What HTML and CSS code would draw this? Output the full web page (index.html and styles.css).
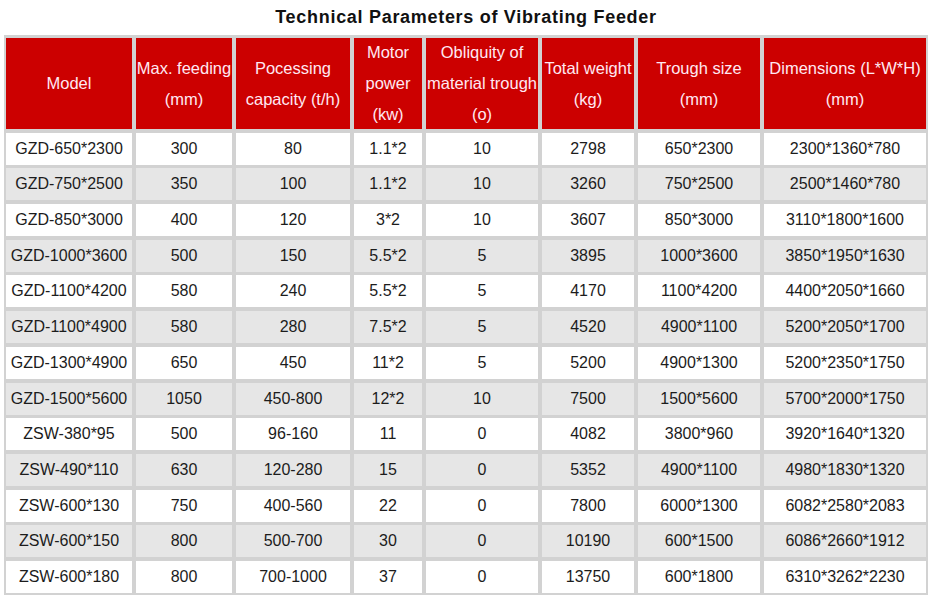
FILE: index.html
```html
<!DOCTYPE html>
<html>
<head>
<meta charset="utf-8">
<link rel="stylesheet" href="styles.css">
</head>
<body>
<h1 class="title">Technical Parameters of Vibrating Feeder</h1>
<div class="grid">
  <div class="th">Model</div>
  <div class="th">Max. feeding<br>(mm)</div>
  <div class="th">Pocessing<br>capacity (t/h)</div>
  <div class="th">Motor<br>power<br>(kw)</div>
  <div class="th">Obliquity of<br>material trough<br>(o)</div>
  <div class="th">Total weight<br>(kg)</div>
  <div class="th">Trough size<br>(mm)</div>
  <div class="th">Dimensions (L*W*H)<br>(mm)</div>

  <div class="td">GZD-650*2300</div><div class="td">300</div><div class="td">80</div><div class="td">1.1*2</div><div class="td">10</div><div class="td">2798</div><div class="td">650*2300</div><div class="td">2300*1360*780</div>
  <div class="td alt">GZD-750*2500</div><div class="td alt">350</div><div class="td alt">100</div><div class="td alt">1.1*2</div><div class="td alt">10</div><div class="td alt">3260</div><div class="td alt">750*2500</div><div class="td alt">2500*1460*780</div>
  <div class="td">GZD-850*3000</div><div class="td">400</div><div class="td">120</div><div class="td">3*2</div><div class="td">10</div><div class="td">3607</div><div class="td">850*3000</div><div class="td">3110*1800*1600</div>
  <div class="td alt">GZD-1000*3600</div><div class="td alt">500</div><div class="td alt">150</div><div class="td alt">5.5*2</div><div class="td alt">5</div><div class="td alt">3895</div><div class="td alt">1000*3600</div><div class="td alt">3850*1950*1630</div>
  <div class="td">GZD-1100*4200</div><div class="td">580</div><div class="td">240</div><div class="td">5.5*2</div><div class="td">5</div><div class="td">4170</div><div class="td">1100*4200</div><div class="td">4400*2050*1660</div>
  <div class="td alt">GZD-1100*4900</div><div class="td alt">580</div><div class="td alt">280</div><div class="td alt">7.5*2</div><div class="td alt">5</div><div class="td alt">4520</div><div class="td alt">4900*1100</div><div class="td alt">5200*2050*1700</div>
  <div class="td">GZD-1300*4900</div><div class="td">650</div><div class="td">450</div><div class="td">11*2</div><div class="td">5</div><div class="td">5200</div><div class="td">4900*1300</div><div class="td">5200*2350*1750</div>
  <div class="td alt">GZD-1500*5600</div><div class="td alt">1050</div><div class="td alt">450-800</div><div class="td alt">12*2</div><div class="td alt">10</div><div class="td alt">7500</div><div class="td alt">1500*5600</div><div class="td alt">5700*2000*1750</div>
  <div class="td">ZSW-380*95</div><div class="td">500</div><div class="td">96-160</div><div class="td">11</div><div class="td">0</div><div class="td">4082</div><div class="td">3800*960</div><div class="td">3920*1640*1320</div>
  <div class="td alt">ZSW-490*110</div><div class="td alt">630</div><div class="td alt">120-280</div><div class="td alt">15</div><div class="td alt">0</div><div class="td alt">5352</div><div class="td alt">4900*1100</div><div class="td alt">4980*1830*1320</div>
  <div class="td">ZSW-600*130</div><div class="td">750</div><div class="td">400-560</div><div class="td">22</div><div class="td">0</div><div class="td">7800</div><div class="td">6000*1300</div><div class="td">6082*2580*2083</div>
  <div class="td alt">ZSW-600*150</div><div class="td alt">800</div><div class="td alt">500-700</div><div class="td alt">30</div><div class="td alt">0</div><div class="td alt">10190</div><div class="td alt">600*1500</div><div class="td alt">6086*2660*1912</div>
  <div class="td">ZSW-600*180</div><div class="td">800</div><div class="td">700-1000</div><div class="td">37</div><div class="td">0</div><div class="td">13750</div><div class="td">600*1800</div><div class="td">6310*3262*2230</div>
</div>
</body>
</html>
```
FILE: styles.css
```css
html, body {
  margin: 0;
  padding: 0;
  background: #ffffff;
  font-family: "Liberation Sans", Arial, sans-serif;
}
body {
  padding: 0 6px 0 4px;
}
.title {
  margin: 0;
  height: 35px;
  line-height: 35px;
  font-size: 18px;
  font-weight: bold;
  letter-spacing: 0.7px;
  text-align: center;
  color: #111111;
}
.grid {
  display: grid;
  grid-template-columns: 126px 96px 114px 68px 112px 92px 122px 162px;
  grid-template-rows: 91px;
  grid-auto-rows: 32px;
  column-gap: 4px;
  row-gap: 3.7px;
  padding: 3px 2px 2px 2px;
  background: #d2d2d2;
  width: 920px;
}
.th {
  background: #cc0000;
  color: #ffe8f2;
  font-size: 16.5px;
  line-height: 31px;
  text-align: center;
  display: flex;
  align-items: center;
  justify-content: center;
  white-space: nowrap;
}
.td {
  background: #ffffff;
  color: #1c1c1c;
  font-size: 16px;
  display: flex;
  align-items: center;
  justify-content: center;
  white-space: nowrap;
}
.td.alt {
  background: #e6e6e6;
}
```
